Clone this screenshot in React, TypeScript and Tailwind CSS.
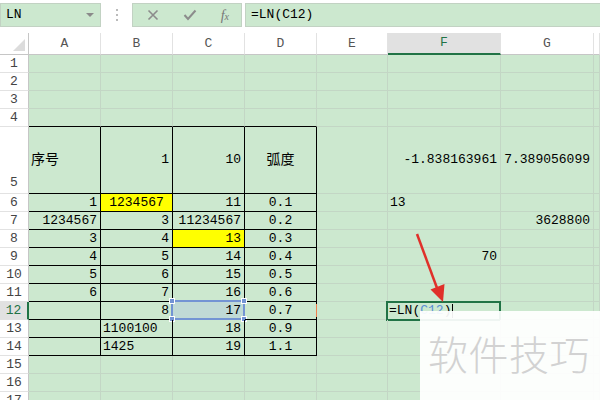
import React from 'react'

type Cell = { t?: React.ReactNode; a?: 'l' | 'r' | 'c'; bg?: string; cjk?: boolean }

const COLS = ['A', 'B', 'C', 'D', 'E', 'F', 'G', 'H']
const WIDTHS = ['w-[72px]', 'w-[72px]', 'w-[72px]', 'w-[72px]', 'w-[71px]', 'w-[113px]', 'w-[93px]', 'flex-1']

const data: Record<string, Cell> = {
  A5: { t: '序号', a: 'l', cjk: true },
  B5: { t: '1' },
  C5: { t: '10' },
  D5: { t: '弧度', a: 'c', cjk: true },
  F5: { t: '-1.838163961' },
  G5: { t: '7.389056099' },
  A6: { t: '1' },
  B6: { t: '1234567', a: 'c', bg: 'bg-[#ffff00]' },
  C6: { t: '11' },
  D6: { t: '0.1', a: 'c' },
  F6: { t: '13', a: 'l' },
  A7: { t: '1234567' },
  B7: { t: '3' },
  C7: { t: '11234567' },
  D7: { t: '0.2', a: 'c' },
  G7: { t: '3628800' },
  A8: { t: '3' },
  B8: { t: '4' },
  C8: { t: '13', bg: 'bg-[#ffff00]' },
  D8: { t: '0.3', a: 'c' },
  A9: { t: '4' },
  B9: { t: '5' },
  C9: { t: '14' },
  D9: { t: '0.4', a: 'c' },
  F9: { t: '70' },
  A10: { t: '5' },
  B10: { t: '6' },
  C10: { t: '15' },
  D10: { t: '0.5', a: 'c' },
  A11: { t: '6' },
  B11: { t: '7' },
  C11: { t: '16' },
  D11: { t: '0.6', a: 'c' },
  B12: { t: '8' },
  C12: { t: '17', bg: 'bg-[#c0dad6]' },
  D12: { t: '0.7', a: 'c' },
  B13: { t: '1100100', a: 'l' },
  C13: { t: '18' },
  D13: { t: '0.9', a: 'c' },
  B14: { t: '1425', a: 'l' },
  C14: { t: '19' },
  D14: { t: '1.1', a: 'c' },
}

function inTable(col: number, row: number) {
  return col <= 3 && row >= 5 && row <= 14
}

function GridCell({ col, row }: { col: number; row: number }) {
  const key = COLS[col] + row
  const c = data[key]
  const table = inTable(col, row)
  const right = table ? 'border-r-black' : 'border-r-[#c3d6c5]'
  const bottom = table || (col <= 3 && row === 4) ? 'border-b-black' : 'border-b-[#c3d6c5]'
  const align = !c?.t ? '' : c.a === 'l' ? 'justify-start pl-[2px]' : c.a === 'c' ? 'justify-center' : 'justify-end pr-[3px]'

  return (
    <div
      className={`${WIDTHS[col]} relative h-full flex items-center border-r border-b ${right} ${bottom} ${c?.bg ?? ''} ${align}`}
    >
      {c?.t && <span className={c.cjk ? 'text-[14px]' : ''}>{c.t}</span>}

      {key === 'C12' && (
        <div className="absolute left-[-2px] top-[-2px] right-[-1px] bottom-[-1px] border-2 border-[#7394d4]">
          <span className="absolute -left-[4px] -top-[4px] w-[6px] h-[6px] bg-[#7394d4] border border-white" />
          <span className="absolute -right-[4px] -top-[4px] w-[6px] h-[6px] bg-[#7394d4] border border-white" />
          <span className="absolute -left-[4px] -bottom-[4px] w-[6px] h-[6px] bg-[#7394d4] border border-white" />
          <span className="absolute -right-[4px] -bottom-[4px] w-[6px] h-[6px] bg-[#7394d4] border border-white" />
        </div>
      )}

      {key === 'D12' && <span className="absolute right-[-1px] top-[2px] w-[1px] h-[13px] bg-[#f08050]" />}

      {key === 'F12' && (
        <div className="absolute left-[-2px] top-[-1px] right-[-1px] bottom-[-2px] border-2 border-[#217346] bg-[#cce8cf] flex items-center pl-[1px]">
          <span>=LN(</span>
          <span className="text-[#5b8fd6]">C12</span>
          <span>)</span>
          <span className="w-[1px] h-[14px] bg-black ml-[1px]" />
        </div>
      )}
    </div>
  )
}

function Row({ row }: { row: number }) {
  const tall = row === 5
  const selected = row === 12
  return (
    <div className={`flex ${tall ? 'h-[67px]' : 'h-[18px]'}`}>
      <div
        className={`w-[29px] h-full flex justify-center border-b border-b-[#e2e2e2] ${
          selected ? 'bg-[#e1e1e1] text-[#217346] border-r-2 border-r-[#217346]' : 'bg-white text-[#444] border-r border-r-[#c6c6c6]'
        } ${tall ? 'items-end pb-[1px]' : 'items-center'}`}
      >
        {row}
      </div>
      {COLS.map((_, i) => (
        <GridCell key={i} col={i} row={row} />
      ))}
    </div>
  )
}

export default function App() {
  const rows = Array.from({ length: 17 }, (_, i) => i + 1)

  return (
    <div className="relative w-[600px] h-[400px] overflow-hidden bg-white text-[13px] text-black font-['Liberation_Mono','Noto_Sans_CJK_SC',monospace]">
      {/* formula bar */}
      <div className="flex h-[33px] pt-[3px]">
        <div className="w-[101px] h-[24px] border border-[#c2d2c3] bg-[#cce8cf] flex items-center justify-between pl-[5px] pr-[6px]">
          <span>LN</span>
          <span className="w-0 h-0 border-l-[4px] border-r-[4px] border-t-[4px] border-l-transparent border-r-transparent border-t-[#8a8a8a]" />
        </div>
        <div className="w-[31px] h-[24px] flex flex-col items-center justify-center gap-[3px]">
          <span className="w-[2px] h-[2px] bg-[#bbb]" />
          <span className="w-[2px] h-[2px] bg-[#bbb]" />
          <span className="w-[2px] h-[2px] bg-[#bbb]" />
        </div>
        <div className="w-[110px] h-[24px] border border-[#c2d2c3] bg-[#cce8cf] flex items-center justify-between pl-[14px] pr-[12px] text-[#8c8c8c]">
          <svg width="12" height="12" viewBox="0 0 12 12">
            <path d="M1.5 1.5 L10.5 10.5 M10.5 1.5 L1.5 10.5" stroke="#8c8c8c" strokeWidth="1.6" />
          </svg>
          <svg width="14" height="12" viewBox="0 0 14 12">
            <path d="M1.5 6 L5 10 L12.5 1.5" stroke="#8c8c8c" strokeWidth="2" fill="none" />
          </svg>
          <span className="font-['Liberation_Serif',serif] italic text-[14px] text-[#777]">
            f<span className="text-[10px]">x</span>
          </span>
        </div>
        <div className="ml-[3px] flex-1 h-[24px] border border-[#c2d2c3] border-r-0 bg-[#cce8cf] flex items-center pl-[5px]">
          =LN(C12)
        </div>
      </div>

      {/* column headers */}
      <div className="flex h-[22px] bg-white text-[#555]">
        <div className="w-[29px] h-full relative border-r border-b border-[#c6c6c6]">
          <svg className="absolute right-[3px] bottom-[3px]" width="12" height="12" viewBox="0 0 12 12">
            <path d="M12 0 L12 12 L0 12 Z" fill="#dcdcdc" />
          </svg>
        </div>
        {COLS.map((c, i) => (
          <div
            key={c}
            className={`${WIDTHS[i]} h-full flex items-center justify-center border-r border-r-[#e2e2e2] ${
              c === 'F' ? 'bg-[#e1e1e1] text-[#217346] border-b-2 border-b-[#217346]' : 'border-b border-b-[#c6c6c6]'
            }`}
          >
            {c === 'H' ? '' : c}
          </div>
        ))}
      </div>

      {/* sheet */}
      <div className="bg-[#cce8cf]">
        {rows.map(r => (
          <Row key={r} row={r} />
        ))}
      </div>

      {/* annotation arrow */}
      <svg className="absolute left-0 top-0 pointer-events-none" width="600" height="400">
        <line x1="417" y1="234" x2="437" y2="288" stroke="#e0302a" strokeWidth="2.5" />
        <polygon points="443,302 444.5,284 430.5,289.5" fill="#e0302a" />
      </svg>

      {/* watermark */}
      <div className="absolute left-[420px] top-[311px] w-[180px] h-[89px] bg-white/[0.93] pl-[8px] pt-[22px]">
        <span className="font-['Noto_Sans_CJK_SC',sans-serif] text-[40px] leading-none font-light text-[#d2d2d2] tracking-[0.5px]">
          软件技巧
        </span>
      </div>
    </div>
  )
}
